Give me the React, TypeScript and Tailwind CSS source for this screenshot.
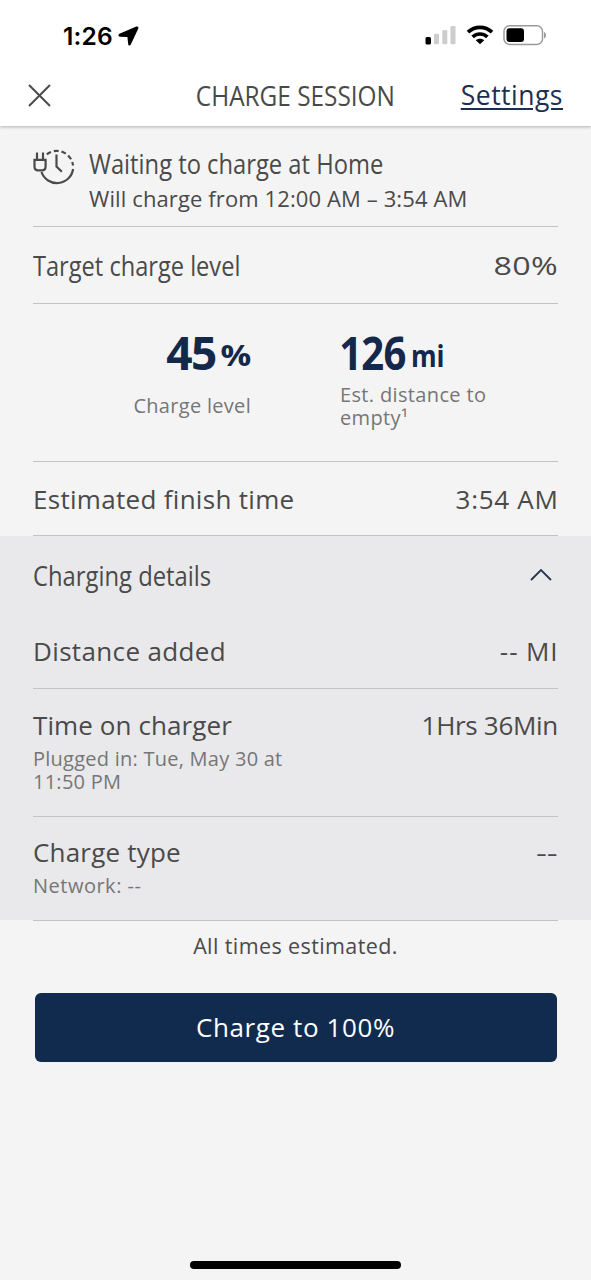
import type { ReactNode } from "react";

function StatusBar() {
  return (
    <div className="flex h-[70px] items-center justify-between pr-[43px] pl-[63px] text-black">
      <div className="flex items-center gap-[5px] pt-[2px]">
        <span className="font-[Inter,sans-serif] text-[24.5px] leading-none font-semibold tracking-[0.2px]">1:26</span>
        <svg width="21" height="20" viewBox="0 0 21 20" fill="currentColor">
          <path d="M18.4 0.6 1.4 7.800C0 8.500 0.200 10.600 1.800 10.700L9.4 11 10.2 18.300C10.4 19.800 12.2 19.900 12.8 18.600L20.300 2.500C20.800 1.200 19.700 0.100 18.400 0.600Z" />
        </svg>
      </div>
      <div className="flex items-center">
        <svg width="31" height="20" viewBox="0 0 31 20">
          <rect x="0.5" y="12" width="5.5" height="7.5" rx="1.5" fill="#000" />
          <rect x="9" y="8.8" width="5" height="10.5" rx="1.3" fill="#cdcdcd" />
          <rect x="17.3" y="5" width="5" height="14.3" rx="1.3" fill="#cdcdcd" />
          <rect x="25.5" y="1" width="5" height="18.3" rx="1.3" fill="#cdcdcd" />
        </svg>
        <svg className="ml-[10px]" width="28" height="20" viewBox="0 0 28 20" fill="none" stroke="#000">
          <path d="M2 7.2C9 .8 19 .8 26 7.2" strokeWidth="3.8" />
          <path d="M6.6 11.9C11 8 17 8 21.4 11.9" strokeWidth="3.6" />
          <path d="M14 19.2 9.8 15.2C12.2 13.2 15.8 13.2 18.2 15.2Z" fill="#000" stroke="none" />
        </svg>
        <svg className="ml-[9px]" width="45" height="22" viewBox="0 0 45 22">
          <rect x="1" y="1.8" width="38.5" height="18.6" rx="5.5" fill="none" stroke="#9a9a9a" strokeWidth="1.5" />
          <rect x="3.5" y="4.3" width="17.5" height="13.6" rx="3" fill="#000" />
          <path d="M41 8v6.5c2.600-1 2.600-5.500 0-6.500Z" fill="#9a9a9a" />
        </svg>
      </div>
    </div>
  );
}

function Header() {
  return (
    <header className="relative z-10 h-[126px] shrink-0 bg-white shadow-[0_1px_3px_rgba(0,0,0,0.28)]">
      <StatusBar />
      <div className="grid h-[50px] grid-cols-[1fr_auto_1fr] items-center px-[28px]">
        <svg width="24" height="24" viewBox="0 0 24 24" fill="none" stroke="#4a4a4a" strokeWidth="2">
          <path d="M1 2 22 23M22 2 1 23" />
        </svg>
        <h1 className="scale-x-[0.87] text-[28px] leading-none font-[470] whitespace-nowrap">CHARGE SESSION</h1>
        <a className="justify-self-end text-[26.5px] leading-none font-[450] tracking-[0.5px] text-[#1b2f52] underline decoration-[1.5px] underline-offset-[3px]">
          Settings
        </a>
      </div>
    </header>
  );
}

function PlugClockIcon() {
  return (
    <svg className="mt-[19px] shrink-0" width="42" height="42" viewBox="0 0 42 42" fill="none" stroke="#4a4a4a" strokeWidth="2.2">
      <path d="M8.5 27A16.3 16.3 0 0 0 40.1 24" />
      <path d="M13.8 9.3A16.3 16.3 0 0 1 40 20.5" strokeDasharray="4.8 2.9" />
      <path d="M23.5 9.5V21.5L28.8 26.8" />
      <path d="M4 7.5V14.5M10 7.5V14.5" />
      <path d="M1.5 14.8H12.6V21.5Q12.6 25.4 8.9 25.4H5.2Q1.5 25.4 1.5 21.5Z" />
    </svg>
  );
}

function Rule() {
  return <div className="mx-[33px] h-px bg-[#c1c3c5]" />;
}

function Row({ label, value, className }: { label: ReactNode; value: ReactNode; className: string }) {
  return (
    <div className={`mx-[33px] flex items-center justify-between text-[26px] leading-none whitespace-nowrap ${className}`}>
      <span>{label}</span>
      <span>{value}</span>
    </div>
  );
}

export default function App() {
  return (
    <div className="flex h-[1280px] w-full flex-col bg-[#f4f4f4] font-['Open_Sans',sans-serif] font-[430] text-[#4a4a4a]">
      <Header />

      <section className="flex h-[100px] pl-[33px]">
        <PlugClockIcon />
        <div className="pt-[22px] pl-[14px] whitespace-nowrap">
          <h2 className="origin-left scale-x-[0.848] text-[28px] leading-[30px] font-[480]">Waiting to charge at Home</h2>
          <p className="mt-[5px] text-[22px] leading-[30px] tracking-[0.11px]">Will charge from 12:00 AM – 3:54 AM</p>
        </div>
      </section>
      <Rule />
      <Row
        className="h-[76px]"
        label={<span className="inline-block origin-left scale-x-[0.843] text-[28px] font-[480]">Target charge level</span>}
        value={<span className="inline-block origin-right scale-x-[1.24] tracking-[0.3px]">80%</span>}
      />
      <Rule />
      <section className="grid h-[157px] grid-cols-[251px_1fr]">
        <div className="flex flex-col items-end pt-[25px]">
          <div className="flex items-end gap-[10px] font-bold text-[#14284b]">
            <span className="text-[46px] leading-[46px] tracking-[-1.5px]">45</span>
            <span className="inline-block origin-right scale-x-[1.22] pb-[5px] text-[28px] leading-[30px]">%</span>
          </div>
          <p className="mt-[19px] text-[20px] leading-[23px] tracking-[0.3px] text-[#767676]">Charge level</p>
        </div>
        <div className="pt-[25px] pl-[89px]">
          <div className="flex origin-left scale-x-[0.87] items-end gap-[6px] font-bold text-[#14284b]">
            <span className="-ml-[1px] text-[46px] leading-[46px] tracking-[-0.8px]">126</span>
            <span className="pb-[4px] text-[30px] leading-[30px]">mi</span>
          </div>
          <p className="mt-[8px] w-[160px] text-[20px] leading-[23px] tracking-[0.35px] text-[#767676]">Est. distance to empty¹</p>
        </div>
      </section>
      <Rule />
      <Row
        className="h-[73px]"
        label={<span className="tracking-[0.3px]">Estimated finish time</span>}
        value={<span className="-mr-[0.5px] tracking-[0.7px]">3:54 AM</span>}
      />
      <Rule />

      <section className="h-[384px] bg-[#e9e9eb]">
        <div className="mx-[33px] flex h-[77px] items-center justify-between">
          <h2 className="origin-left scale-x-[0.85] text-[28px] leading-none font-[480]">Charging details</h2>
          <svg className="mr-[6px]" width="22" height="14" viewBox="0 0 22 14" fill="none" stroke="#26364f" strokeWidth="1.8">
            <path d="M1 12 11 2 21 12" />
          </svg>
        </div>
        <Row
          className="h-[75px]"
          label={<span className="tracking-[0.35px]">Distance added</span>}
          value={<span className="-mr-[0.5px] tracking-[0.9px]">-- MI</span>}
        />
        <Rule />
        <div className="h-[127px] pt-[21px]">
          <Row
            className="h-[30px]"
            label={<span className="tracking-[0.1px]">Time on charger</span>}
            value={<span className="tracking-[-0.3px]">1Hrs 36Min</span>}
          />
          <p className="mx-[33px] mt-[7px] w-[270px] text-[20px] leading-[23px] tracking-[0.25px] text-[#767676]">
            Plugged in: Tue, May 30 at 11:50 PM
          </p>
        </div>
        <Rule />
        <div className="pt-[20px]">
          <Row
            className="h-[30px]"
            label={<span className="tracking-[0.2px]">Charge type</span>}
            value={<span className="inline-block origin-right scale-x-[1.3]">--</span>}
          />
          <p className="mx-[33px] mt-[7px] text-[20px] leading-[23px] tracking-[0.5px] text-[#767676]">Network: --</p>
        </div>
      </section>
      <Rule />

      <p className="mt-[10px] text-center text-[21.5px] leading-[30px] tracking-[0.4px]">All times estimated.</p>
      <button className="mx-[34.5px] mt-[32px] h-[69px] rounded-[6px] bg-[#112b4e] pb-px text-[26px] leading-none tracking-[0.6px] text-white">
        Charge to 100%
      </button>
      <div className="mx-auto mt-auto mb-[11px] h-[8px] w-[211px] rounded-full bg-black" />
    </div>
  );
}
